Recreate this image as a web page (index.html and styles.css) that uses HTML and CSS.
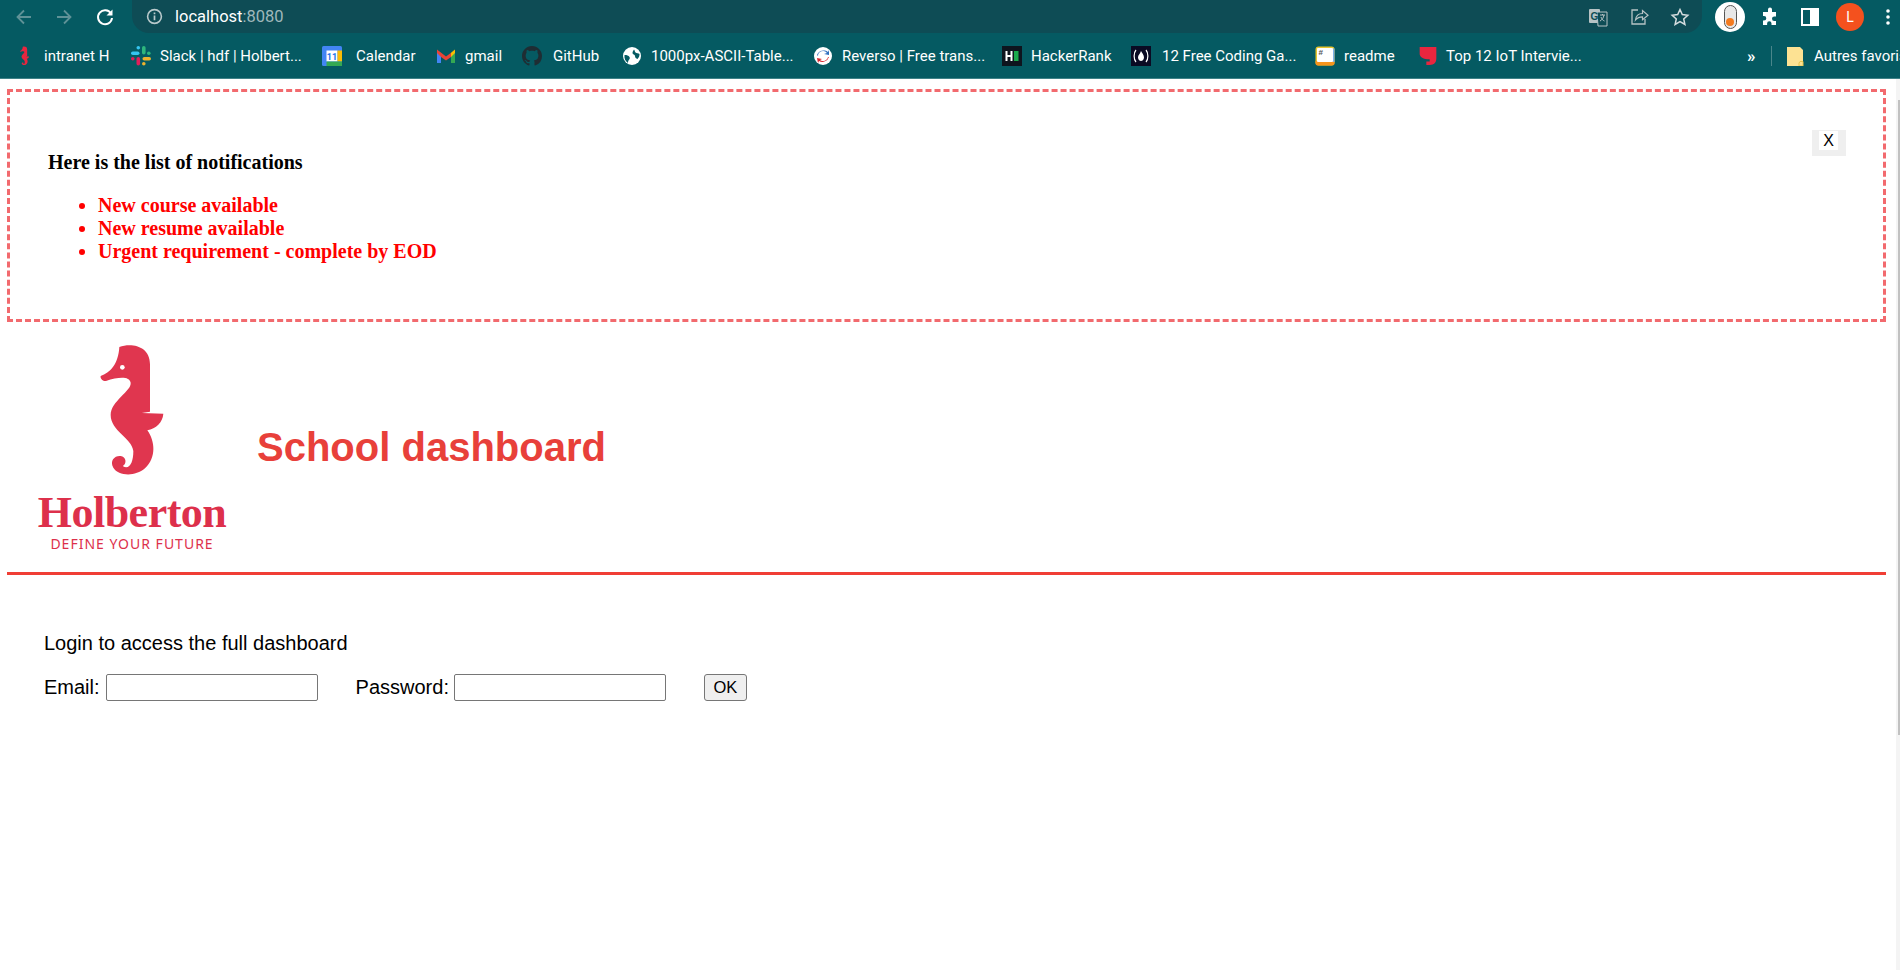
FILE: index.html
```html
<!DOCTYPE html>
<html>
<head>
<title>School dashboard</title>
<link rel="stylesheet" href="styles.css">
</head>
<body>
	<div class="browser">
		<div class="toolbar">
			<div class="nav_buttons">
				<svg class="nav_icon" viewBox="0 0 20 20"><path d="M17 10H4M10 3.5 3.5 10l6.500 6.500" stroke="#5f9297" stroke-width="1.800" fill="none"/></svg>
				<svg class="nav_icon" viewBox="0 0 20 20"><path d="M3 10h13M10 3.500 16.500 10 10 16.500" stroke="#5f9297" stroke-width="1.800" fill="none"/></svg>
				<svg class="nav_icon reload" viewBox="0 0 20 20"><path d="M16 6.500A7 7 0 1 0 17 11" stroke="#fff" stroke-width="2" fill="none"/><path d="M17.500 2.500v6h-6z" fill="#fff"/></svg>
			</div>
			<div class="omnibox">
				<div class="address">
					<svg class="info_icon" viewBox="0 0 16 16"><circle cx="8" cy="8" r="6.500" stroke="#b9c9cb" stroke-width="1.500" fill="none"/><path d="M8 7v4.500M8 4.200v1.600" stroke="#b9c9cb" stroke-width="1.600"/></svg>
					<span class="host">localhost</span><span class="port">:8080</span>
				</div>
				<div class="omni_actions">
					<svg class="omni_icon" viewBox="0 0 20 20"><rect x="1" y="2" width="11" height="14" rx="1" fill="#b7c3c5"/><path d="M9 5h10v14H10z" fill="#0e4c55" stroke="#b7c3c5"/><text x="2.500" y="12.500" class="g_letter">G</text><path d="M12 8h5M14.500 7v1M16 8c-.5 3-2 5-4 6M13 10c.5 2 2 3.500 3.500 4" stroke="#b7c3c5" fill="none"/></svg>
					<svg class="omni_icon" viewBox="0 0 20 20"><path d="M9 3H3v14h13v-5" stroke="#b7c3c5" stroke-width="1.300" fill="none"/><path d="M6.500 13c.5-4 3-6.500 7-6.500V3.500L19 8.200l-5.500 4.600v-3c-3 0-5.300 1-7 3.200z" stroke="#b7c3c5" stroke-width="1.200" fill="none"/></svg>
					<svg class="omni_icon" viewBox="0 0 20 20"><path d="m10 2.500 2.300 5.100 5.500.6-4.100 3.700 1.200 5.500L10 14.600l-4.900 2.800 1.200-5.500-4.100-3.700 5.500-.6z" stroke="#d5dddf" stroke-width="1.500" fill="none"/></svg>
				</div>
			</div>
			<div class="extensions">
				<div class="ext_badge"><div class="ext_pill"><div class="ext_dot"></div></div></div>
				<svg class="puzzle" viewBox="0 0 20 20"><path d="M8 2.500a2 2 0 0 1 4 0V5h4v4.500h-1.800a2.200 2.200 0 0 0 0 4.400H16V18h-4.500v-1.500a2.200 2.200 0 0 0-4.400 0V18H3v-4.500h1a2.300 2.300 0 0 0 0-4.600H3V5h5z" fill="#fff"/></svg>
				<div class="side_panel"><div class="side_panel_fill"></div></div>
				<div class="avatar">L</div>
				<svg class="dots" viewBox="0 0 4 18"><circle cx="2" cy="3" r="1.800" fill="#fff"/><circle cx="2" cy="9" r="1.800" fill="#fff"/><circle cx="2" cy="15" r="1.800" fill="#fff"/></svg>
			</div>
		</div>
		<div class="bookmarks">
			<div class="bm bm_intranet">
				<svg class="bm_icon" viewBox="0 0 270 420"><path class="horse" d="M88 18C125 5 180 15 180 70V212L155 216 220 218C218 245 198 262 172 268 195 300 200 350 165 382 135 408 85 405 70 380 58 358 75 343 92 345 108 347 112 368 98 375 118 388 130 365 130 330 125 290 62 270 62 222 62 180 125 150 122 125 118 105 85 108 48 120 38 122 30 112 32 105 60 95 85 70 88 18Z"/></svg>
				<span>intranet H</span>
			</div>
			<div class="bm bm_slack">
				<svg class="bm_icon" viewBox="0 0 20 20"><rect x="5.500" y="0" width="3.600" height="3.600" rx="1.800" fill="#36c5f0"/><rect x="11" y="0" width="3.600" height="8.500" rx="1.800" fill="#2eb67d"/><rect x="11.500" y="11" width="8.500" height="3.600" rx="1.800" fill="#ecb22e"/><rect x="5.500" y="11" width="3.600" height="8.500" rx="1.800" fill="#e01e5a"/><rect x="0" y="5.500" width="8.500" height="3.600" rx="1.800" fill="#36c5f0"/><rect x="0" y="11" width="3.600" height="3.600" rx="1.800" fill="#e01e5a"/><rect x="16" y="5.500" width="3.600" height="3.600" rx="1.800" fill="#2eb67d"/><rect x="11" y="16" width="3.600" height="3.600" rx="1.800" fill="#ecb22e"/></svg>
				<span>Slack | hdf | Holbert...</span>
			</div>
			<div class="bm bm_calendar">
				<svg class="bm_icon" viewBox="0 0 20 20"><rect x="0" y="0" width="20" height="20" rx="1.500" fill="#4285f4"/><rect x="4.500" y="4.500" width="11" height="11" fill="#fff"/><rect x="15.500" y="4.500" width="4.500" height="11" fill="#fbbc04"/><rect x="4.500" y="15.500" width="15.500" height="4.500" fill="#34a853"/><text x="10" y="13.500" class="cal_num">11</text></svg>
				<span>Calendar</span>
			</div>
			<div class="bm bm_gmail">
				<svg class="bm_icon" viewBox="0 0 20 20"><path d="M1 5v12h4V8z" fill="#4285f4"/><path d="M19 5v12h-4V8z" fill="#34a853"/><path d="M1 3.500 10 10.500 15 6.700V11l-5 3.500L5 11 1 7z" fill="#ea4335"/><path d="M15 6.700 19 3.500V7l-4 4z" fill="#fbbc04"/></svg>
				<span>gmail</span>
			</div>
			<div class="bm bm_github">
				<svg class="bm_icon" viewBox="0 0 16 16"><path fill="#1f2d33" d="M8 0C3.580 0 0 3.580 0 8c0 3.540 2.290 6.530 5.470 7.590.4.070.55-.17.55-.38 0-.19-.01-.82-.01-1.490-2.010.37-2.530-.49-2.690-.94-.09-.23-.48-.94-.82-1.130-.28-.15-.68-.52-.01-.53.63-.01 1.080.58 1.230.82.720 1.210 1.870.870 2.330.660.070-.520.280-.870.510-1.070-1.780-.2-3.640-.890-3.640-3.950 0-.870.310-1.590.820-2.150-.080-.2-.360-1.020.080-2.120 0 0 .670-.210 2.200.820.640-.180 1.320-.270 2-.270s1.360.090 2 .270c1.530-1.040 2.200-.820 2.200-.820.440 1.100.160 1.920.080 2.120.510.560.820 1.270.820 2.150 0 3.070-1.870 3.750-3.650 3.950.290.250.540.730.540 1.480 0 1.070-.010 1.930-.010 2.200 0 .210.150.460.550.380A8.010 8.010 0 0 0 16 8c0-4.420-3.580-8-8-8z"/></svg>
				<span>GitHub</span>
			</div>
			<div class="bm bm_ascii">
				<svg class="bm_icon" viewBox="0 0 20 20"><circle cx="10" cy="10" r="9" fill="#fff"/><path d="M2.500 9c2.500 0 4 .5 5 2s-.5 2.500-1 3.500-.5 2-.5 2.500C3.500 15.500 2 12.500 2.500 9zM12 3.500c1 1 .5 2 1.500 3s3 .5 4 1.500c0 2-.5 3.500-2 5-1.500-.5-2.500-1.500-2.500-3s-2.500-1.500-2.500-3 1-2.500 1.500-3.500z" fill="#055a62"/></svg>
				<span>1000px-ASCII-Table...</span>
			</div>
			<div class="bm bm_reverso">
				<svg class="bm_icon" viewBox="0 0 20 20"><circle cx="10" cy="10" r="9" fill="#fff"/><path d="M5 10a5 5 0 0 1 9-3l-3 1 5 1V4l-1 2A7 7 0 0 0 4 9z" fill="#2f6fbf"/><path d="M15 11a5 5 0 0 1-8 3l2-1-5-1 1 5 1-2a7 7 0 0 0 10-4z" fill="#d9262e"/></svg>
				<span>Reverso | Free trans...</span>
			</div>
			<div class="bm bm_hacker">
				<svg class="bm_icon" viewBox="0 0 20 20"><rect width="20" height="20" fill="#0e141e"/><path d="M4.500 5v10M9.500 5v10M4.500 10h5" stroke="#fff" stroke-width="2"/><rect x="12" y="5" width="4.500" height="10" fill="#1ba94c"/></svg>
				<span>HackerRank</span>
			</div>
			<div class="bm bm_fcc">
				<svg class="bm_icon" viewBox="0 0 20 20"><rect width="20" height="20" fill="#0a0a23"/><path d="M5 4C2.500 7 2.500 13 5 16M15 4c2.500 3 2.500 9 0 12" stroke="#fff" stroke-width="1.200" fill="none"/><path d="M10 5c1 2 3 4 3 6.500S11 15 10 15s-3-1-3-3.500S9 8 10 5z" fill="#fff"/></svg>
				<span>12 Free Coding Ga...</span>
			</div>
			<div class="bm bm_readme">
				<svg class="bm_icon" viewBox="0 0 20 20"><rect x="0.500" y="0.500" width="19" height="19" rx="3" fill="#e8c52c"/><path d="M.5 15v2A2.500 2.500 0 0 0 3 19.500h14a2.500 2.500 0 0 0 2.500-2.500v-2z" fill="#f7941d"/><path d="M18 2.500h1.500V16H18z" fill="#7fb2e8"/><rect x="2" y="2" width="16" height="14" rx="1" fill="#fff"/><text x="3.500" y="9" class="hash">#</text></svg>
				<span>readme</span>
			</div>
			<div class="bm bm_top">
				<svg class="bm_icon" viewBox="0 0 15 18"><path d="M0 1h15v10c0 4-2 6-6 6H6v-3h3v-2C3 12 0 10 0 7z" fill="#e8263f"/></svg>
				<span>Top 12 IoT Intervie...</span>
			</div>
			<div class="bm_more">»</div>
			<div class="bm_sep"></div>
			<div class="bm bm_folder">
				<svg class="bm_icon" viewBox="0 0 20 20"><path d="M2 1h13l3 3v16H2z" fill="#fde293"/><path d="M15 15.500h3V20h-4v-3z" fill="none" stroke="#e8c44c"/></svg>
				<span>Autres favoris</span>
			</div>
		</div>
	</div>

	<div class="scroll_track"><div class="scroll_thumb"></div></div>

	<div class="app">
		<div class="notifications">
			<button class="close_btn"><span>X</span></button>
			<p class="notif_title">Here is the list of notifications</p>
			<ul class="notif_list">
				<li>New course available</li>
				<li>New resume available</li>
				<li>Urgent requirement - complete by EOD</li>
			</ul>
		</div>
		<div class="app_header">
			<div class="logo">
				<svg class="logo_horse" viewBox="0 0 270 420"><path class="horse_logo" d="M88 18C125 5 180 15 180 70V212L155 216 220 218C218 245 198 262 172 268 195 300 200 350 165 382 135 408 85 405 70 380 58 358 75 343 92 345 108 347 112 368 98 375 118 388 130 365 130 330 125 290 62 270 62 222 62 180 125 150 122 125 118 105 85 108 48 120 38 122 30 112 32 105 60 95 85 70 88 18Z"/><circle cx="97" cy="79" r="7" fill="#fff"/></svg>
				<div class="logo_name">Holberton</div>
				<div class="logo_tag">DEFINE YOUR FUTURE</div>
			</div>
			<h1>School dashboard</h1>
		</div>
		<div class="app_body">
			<p class="login_text">Login to access the full dashboard</p>
			<form class="login_form">
				<label for="email">Email:</label>
				<input type="text" id="email">
				<label for="password" class="pass_label">Password:</label>
				<input type="password" id="password">
				<button type="button" class="ok_btn">OK</button>
			</form>
		</div>
	</div>
</body>
</html>
```

FILE: styles.css
```css
html, body {
	margin: 0;
	padding: 0;
	height: 100%;
	overflow: hidden;
	background: #fff;
}

body {
	font-family: "Liberation Sans", Arial, sans-serif;
}

.browser {
	background: #055a62;
	border-bottom: 1px solid #3f8288;
	height: 78px;
}

.toolbar {
	display: flex;
	height: 33px;
}

.nav_buttons {
	display: flex;
	align-items: center;
	gap: 20px;
	width: 132px;
	padding-left: 14px;
	box-sizing: border-box;
}

.nav_icon {
	width: 20px;
	height: 20px;
}

.reload {
	margin-left: 1px;
}

.omnibox {
	display: flex;
	justify-content: space-between;
	align-items: center;
	width: 1570px;
	background: #0e4c55;
	border-radius: 0 0 17px 17px;
}

.address {
	display: flex;
	align-items: center;
	padding-left: 14px;
	font-family: Roboto, sans-serif;
	font-size: 16.500px;
}

.info_icon {
	width: 17px;
	height: 17px;
	margin-right: 12px;
}

.host {
	color: #fff;
}

.port {
	color: #9fb8bb;
}

.omni_actions {
	display: flex;
	gap: 21px;
	padding-right: 12px;
}

.omni_icon {
	width: 20px;
	height: 20px;
}

.g_letter {
	font-family: "Liberation Sans", sans-serif;
	font-size: 10px;
	font-weight: bold;
	fill: #0e4c55;
}

.extensions {
	display: flex;
	align-items: center;
	flex: 1;
	padding-left: 13px;
}

.ext_badge {
	display: flex;
	justify-content: center;
	align-items: center;
	width: 30px;
	height: 30px;
	background: #fff;
	border-radius: 50%;
}

.ext_pill {
	position: relative;
	width: 13px;
	height: 24px;
	border: 1.500px solid #555;
	border-radius: 7px;
	box-sizing: border-box;
	background: #e8e8e8;
}

.ext_dot {
	position: absolute;
	left: 1px;
	bottom: 2px;
	width: 8px;
	height: 8px;
	background: #f47b20;
	border-radius: 50%;
}

.puzzle {
	width: 20px;
	height: 20px;
	margin-left: 15px;
}

.side_panel {
	display: flex;
	justify-content: flex-end;
	width: 18px;
	height: 18px;
	margin-left: 21px;
	background: #055a62;
	border: 2px solid #fff;
	box-sizing: border-box;
}

.side_panel_fill {
	width: 7px;
	background: #fff;
}

.avatar {
	width: 28px;
	height: 28px;
	margin-left: 17px;
	border-radius: 50%;
	background: #f4511e;
	color: #fff;
	font-family: Roboto, sans-serif;
	font-size: 14px;
	line-height: 28px;
	text-align: center;
}

.dots {
	width: 4px;
	height: 18px;
	margin-left: 22px;
}

.bookmarks {
	display: flex;
	align-items: center;
	height: 45px;
	padding-left: 15px;
	overflow: hidden;
	white-space: nowrap;
	color: #fff;
	font-family: Roboto, sans-serif;
	font-size: 15px;
}

.bm {
	display: flex;
	align-items: center;
	gap: 9px;
	flex: none;
}

.bm_icon {
	width: 20px;
	height: 20px;
	flex: none;
}

.horse {
	fill: #e8263f;
}

.cal_num {
	font-family: Roboto, sans-serif;
	font-size: 9px;
	font-weight: bold;
	fill: #1a73e8;
	text-anchor: middle;
}

.hash {
	font-family: "Liberation Sans", sans-serif;
	font-size: 8px;
	font-weight: bold;
	fill: #555;
}

.bm_intranet { width: 116px; }
.bm_slack { width: 191px; }
.bm_calendar { width: 114px; gap: 14px; }
.bm_gmail { width: 86px; }
.bm_github { width: 100px; gap: 11px; }
.bm_ascii { width: 191px; }
.bm_reverso { width: 189px; }
.bm_hacker { width: 129px; }
.bm_fcc { width: 184px; gap: 11px; }
.bm_readme { width: 103px; }
.bm_top { width: 329px; gap: 8px; }

.bm_more {
	flex: none;
	width: 24px;
	font-size: 17px;
	font-weight: bold;
}

.bm_sep {
	flex: none;
	width: 1px;
	height: 20px;
	margin-right: 13px;
	background: #4a868b;
}

.app {
	padding: 10px 10px 0 7px;
	margin-right: 4px;
}

.notifications {
	position: relative;
	box-sizing: border-box;
	height: 233px;
	padding: 59px 38px 0 38px;
	border: 3px dashed #f26a6e;
	font-family: "Liberation Serif", "Times New Roman", serif;
	font-weight: bold;
}

.notif_title {
	margin: 0 0 20px 0;
	font-size: 20px;
	line-height: 23px;
}

.notif_list {
	margin: 0;
	padding-left: 50px;
	color: #f00;
	font-size: 20px;
	line-height: 23px;
}

.close_btn {
	position: absolute;
	top: 38px;
	right: 37px;
	width: 34px;
	height: 26px;
	padding: 1px 8px 6px 7px;
	border: 0;
	background: #efefef;
	font-family: "Liberation Sans", sans-serif;
	font-size: 16px;
	line-height: 19px;
}

.close_btn span {
	display: block;
	background: #fff;
	color: #000;
}

.app_header {
	display: flex;
	align-items: center;
	gap: 31px;
	height: 250px;
	padding-left: 31px;
	border-bottom: 3px solid #f03e35;
}

.logo {
	display: flex;
	flex-direction: column;
	align-items: center;
	width: 188px;
}

.logo_horse {
	width: 90px;
	height: 140px;
	margin: -2px 0 2px 5px;
}

.horse_logo {
	fill: #e0364f;
}

.logo_name {
	margin-top: 8px;
	color: #dd304b;
	font-family: "Liberation Serif", serif;
	font-weight: bold;
	font-size: 44px;
	line-height: 44px;
	letter-spacing: -0.500px;
}

.logo_tag {
	margin-top: 1px;
	color: #dd304b;
	font-family: "Noto Sans", sans-serif;
	font-size: 14px;
	line-height: 16px;
	letter-spacing: 1px;
}

h1 {
	margin: 0;
	color: #e8403a;
	font-size: 40px;
	font-weight: bold;
}

.app_body {
	padding: 57px 0 0 37px;
	font-size: 20px;
}

.login_text {
	margin: 0 0 19px 0;
	line-height: 23px;
}

.login_form {
	display: flex;
	align-items: center;
	height: 27px;
}

.login_form label {
	margin-right: 6px;
}

.login_form input {
	box-sizing: border-box;
	width: 212px;
	height: 27px;
	margin: 0;
	border: 1px solid #767676;
	border-radius: 2px;
	background: #fff;
}

.login_form .pass_label {
	margin-left: 38px;
	margin-right: 5px;
}

.ok_btn {
	width: 43px;
	height: 27px;
	margin-left: 38px;
	padding: 0;
	border: 1px solid #767676;
	border-radius: 3px;
	background: #efefef;
	font-family: "Liberation Sans", sans-serif;
	font-size: 16.500px;
}

.scroll_track {
	position: fixed;
	top: 79px;
	right: 0;
	bottom: 0;
	width: 4px;
	background: #f4f4f4;
}

.scroll_thumb {
	position: absolute;
	top: 21px;
	right: 0;
	width: 2px;
	height: 635px;
	background: #c1c1c1;
}
```
